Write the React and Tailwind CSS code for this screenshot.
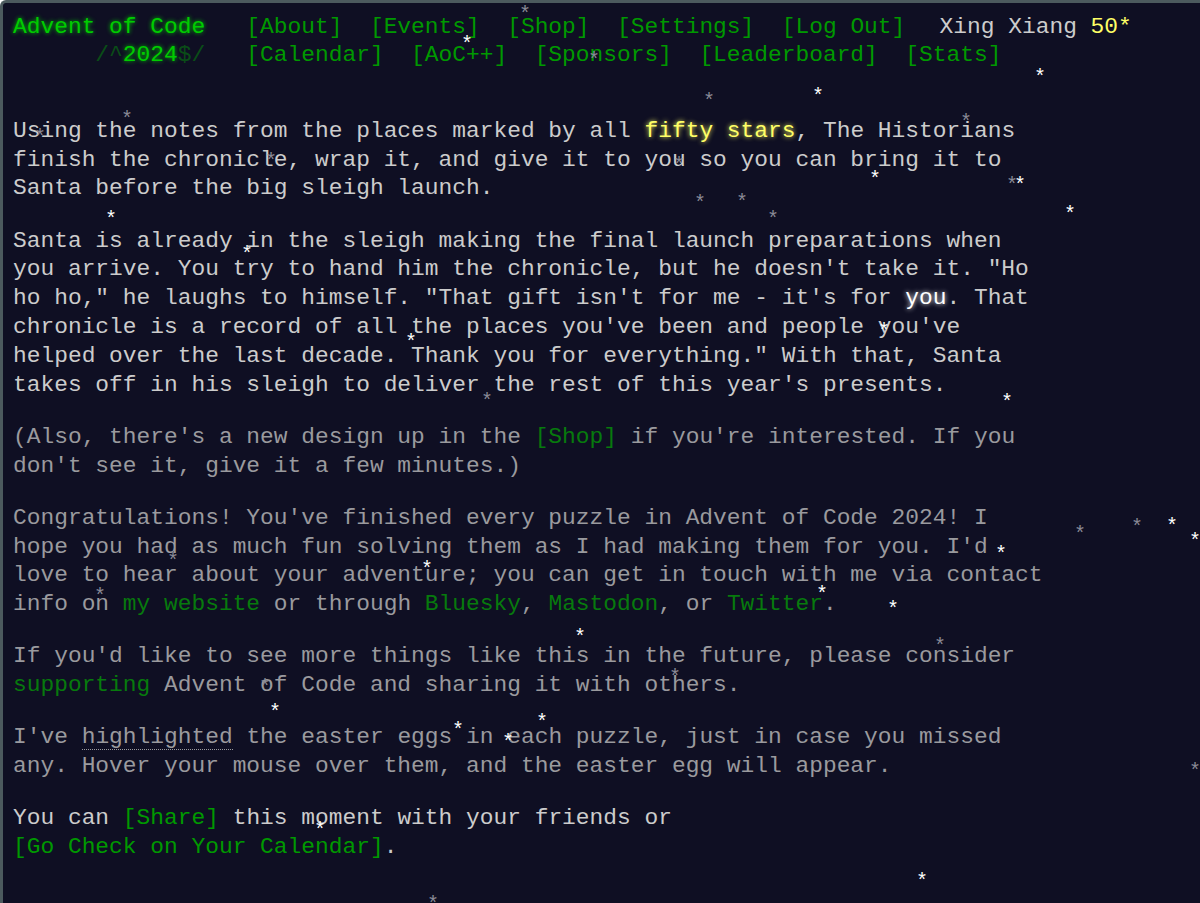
import React from "react";

const mono = { fontFamily: '"Liberation Mono", "DejaVu Sans Mono", monospace' };

// snow flakes drifting over the page: [x, y, bright]
const flakes = [
  [467, 40, 1], [525, 10, 0], [594, 56, 0], [818, 92, 1], [1040, 73, 1], [709, 97, 0],
  [966, 118, 0], [127, 115, 0], [40, 133, 0], [271, 157, 0], [679, 161, 0],
  [875, 175, 1], [1012, 181, 0], [1020, 181, 1], [1070, 210, 1], [111, 215, 1],
  [700, 199, 0], [742, 198, 0], [773, 215, 0], [247, 250, 1], [884, 327, 1],
  [411, 338, 1], [487, 397, 0], [1007, 398, 1], [1080, 530, 0], [1137, 523, 0],
  [1172, 522, 1], [1195, 537, 1], [1001, 550, 1], [173, 557, 0], [427, 565, 1],
  [100, 592, 0], [822, 590, 1], [893, 605, 1], [580, 633, 1], [940, 642, 0],
  [675, 673, 0], [265, 683, 0], [275, 708, 1], [542, 718, 1], [458, 726, 1],
  [508, 738, 1], [1195, 767, 0], [320, 826, 1], [922, 877, 1], [433, 900, 0],
];

function Nav({ children }) {
  return <a className="text-[#009900] hover:text-[#99ff99] cursor-pointer">{children}</a>;
}

function Dim({ children }) {
  return <a className="text-[#077a0d] cursor-pointer">{children}</a>;
}

export default function App() {
  return (
    <div
      className="relative min-h-[903px] overflow-hidden bg-[#0f0f23] text-[#cccccc] text-[22.88px] leading-[28.8px] border-t-[3px] border-l-[3px] border-[#4c5a5e] rounded-tl-[6px] pl-[10px] pt-[10px]"
      style={mono}
    >
      <header className="flex gap-[3ch]">
        <div className="flex flex-col items-end">
          <h1 className="text-[#00cc00] [text-shadow:0_0_4px_#00cc00]">Advent of Code</h1>
          <div className="text-[#00cc00] leading-[27px]">
            <span className="opacity-[0.33]">/^</span>
            <span className="[text-shadow:0_0_4px_#00cc00]">2024</span>
            <span className="opacity-[0.33]">$/</span>
          </div>
        </div>
        <div className="flex flex-col">
          <nav className="flex gap-[2ch]">
            <Nav>[About]</Nav>
            <Nav>[Events]</Nav>
            <Nav>[Shop]</Nav>
            <Nav>[Settings]</Nav>
            <Nav>[Log Out]</Nav>
            <span className="ml-[0.5ch]">
              Xing Xiang <span className="text-[#ffff66]">50*</span>
            </span>
          </nav>
          <nav className="flex gap-[2ch] leading-[27px]">
            <Nav>[Calendar]</Nav>
            <Nav>[AoC++]</Nav>
            <Nav>[Sponsors]</Nav>
            <Nav>[Leaderboard]</Nav>
            <Nav>[Stats]</Nav>
          </nav>
        </div>
      </header>

      <main className="mt-[48px] max-w-[75.5ch] flex flex-col gap-[23.4px]">
        <p>
          Using the notes from the places marked by all{" "}
          <span className="text-[#ffff66] [text-shadow:0_0_5px_#ffff66]">fifty stars</span>, The
          Historians finish the chronicle, wrap it, and give it to you so you can bring it to
          Santa before the big sleigh launch.
        </p>
        <p>
          Santa is already in the sleigh making the final launch preparations when you arrive.
          You try to hand him the chronicle, but he doesn't take it. "Ho ho ho," he laughs to
          himself. "That gift isn't for me - it's for{" "}
          <span className="text-white [text-shadow:0_0_5px_#ffffff]">you</span>. That chronicle
          is a record of all the places you've been and people you've helped over the last
          decade. Thank you for everything." With that, Santa takes off in his sleigh to deliver
          the rest of this year's presents.
        </p>
        <p className="text-[#9a9a9e]">
          (Also, there's a new design up in the <Dim>[Shop]</Dim> if you're interested. If you
          don't see it, give it a few minutes.)
        </p>
        <p className="text-[#9a9a9e]">
          Congratulations! You've finished every puzzle in Advent of Code 2024! I hope you had
          as much fun solving them as I had making them for you. I'd love to hear about your
          adventure; you can get in touch with me via contact info on <Dim>my website</Dim> or
          through <Dim>Bluesky</Dim>, <Dim>Mastodon</Dim>, or <Dim>Twitter</Dim>.
        </p>
        <p className="text-[#9a9a9e]">
          If you'd like to see more things like this in the future, please consider{" "}
          <Dim>supporting</Dim> Advent of Code and sharing it with others.
        </p>
        <p className="text-[#9a9a9e]">
          I've{" "}
          <span className="border-b border-dotted border-[#9a9a9e] leading-[24px] inline-block">
            highlighted
          </span>{" "}
          the easter eggs in each puzzle, just in case you missed any. Hover your mouse over
          them, and the easter egg will appear.
        </p>
        <p>
          You can <Nav>[Share]</Nav> this moment with your friends or
          <br />
          <Nav>[Go Check on Your Calendar]</Nav>.
        </p>
      </main>

      {flakes.map(([x, y, bright], i) => (
        <span
          key={i}
          className={`absolute -translate-x-1/2 -translate-y-1/2 text-[20px] leading-none pointer-events-none ${
            bright ? "text-white" : "text-[#8a8a96]"
          }`}
          style={{ left: x - 3, top: y + 2 }}
        >
          *
        </span>
      ))}
    </div>
  );
}
